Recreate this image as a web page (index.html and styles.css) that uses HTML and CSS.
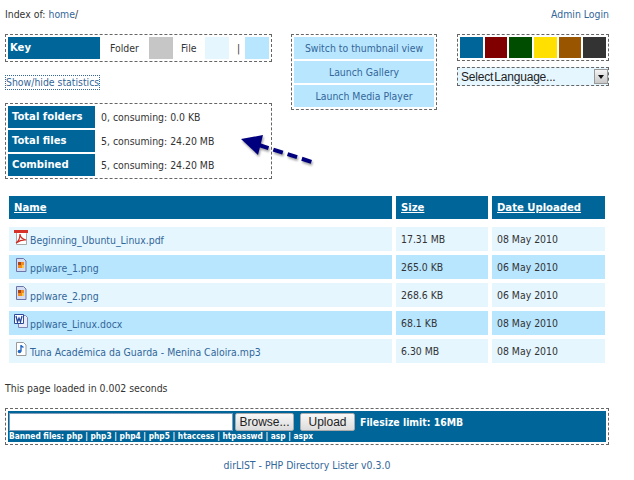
FILE: index.html
```html
<!DOCTYPE html>
<html lang="en">
<head>
  <meta charset="UTF-8" />
  <title>dirLIST - Index of home/</title>
  <link rel="stylesheet" href="styles.css">
</head>
<body>

  <!-- Top line -->
  <div class="top-line">
    <div>Index of: <a href="#">home</a>/</div>
    <a href="#">Admin Login</a>
  </div>

  <!-- Panels -->
  <div class="panels">
    <div class="left-col">
      <div class="box key-box">
        <div class="key-title">Key</div>
        <span class="key-label key-folder">Folder</span>
        <span class="swatch swatch-folder"></span>
        <span class="key-label key-file">File</span>
        <span class="swatch swatch-file"></span>
        <span class="key-label key-sep">|</span>
        <span class="swatch swatch-alt"></span>
      </div>
      <a href="#" class="stats-toggle">Show/hide statistics</a>
      <div class="box stats-box">
        <div class="stats-row"><div class="stats-title">Total folders</div><div>0, consuming: 0.0 KB</div></div>
        <div class="stats-row"><div class="stats-title">Total files</div><div>5, consuming: 24.20 MB</div></div>
        <div class="stats-row"><div class="stats-title">Combined</div><div>5, consuming: 24.20 MB</div></div>
      </div>
    </div>

    <div class="box view-box">
      <a href="#" class="view-link">Switch to thumbnail view</a>
      <a href="#" class="view-link">Launch Gallery</a>
      <a href="#" class="view-link">Launch Media Player</a>
    </div>

    <div class="right-col">
      <div class="box theme-box">
        <span class="theme theme-blue"></span>
        <span class="theme theme-red"></span>
        <span class="theme theme-green"></span>
        <span class="theme theme-yellow"></span>
        <span class="theme theme-brown"></span>
        <span class="theme theme-dark"></span>
      </div>
      <div class="lang-select">
        <span>Select Language...</span>
        <span class="lang-arrow"></span>
      </div>
    </div>
  </div>

  <!-- File listing -->
  <div class="listing">
    <div class="head-row">
      <a href="#">Name</a>
      <a href="#">Size</a>
      <a href="#">Date Uploaded</a>
    </div>

    <div class="file-row">
      <div class="file-name">
        <svg class="file-icon" viewBox="0 0 16 16">
          <path d="M3.5 2.5h8l2 2v11h-10z" fill="#fff" stroke="#a9a9a9"/>
          <path d="M1 1h14v3H1z" fill="#d8332a"/>
          <path d="M3 14c3-2 4-6 4-9 0 3 2 5 6 6-4-.5-7 1-10 3z" fill="none" stroke="#cc2a22" stroke-width="1.2"/>
        </svg>
        <a href="#">Beginning_Ubuntu_Linux.pdf</a>
      </div>
      <div>17.31 MB</div>
      <div>08 May 2010</div>
    </div>

    <div class="file-row alt">
      <div class="file-name">
        <svg class="file-icon" viewBox="0 0 16 16">
          <path d="M3.5 1.5h7l2.500 2.500v10.500h-9.500z" fill="#d6dcf0" stroke="#6a76a8"/>
          <path d="M5 5h6v6H5z" fill="#f08a1d"/>
          <path d="M5 5h3v3H5z" fill="#a8481a"/>
          <path d="M9 8h2v3H9z" fill="#f7c94d"/>
        </svg>
        <a href="#">pplware_1.png</a>
      </div>
      <div>265.0 KB</div>
      <div>06 May 2010</div>
    </div>

    <div class="file-row">
      <div class="file-name">
        <svg class="file-icon" viewBox="0 0 16 16">
          <path d="M3.5 1.500h7l2.500 2.500v10.500h-9.500z" fill="#d6dcf0" stroke="#6a76a8"/>
          <path d="M5 5h6v6H5z" fill="#f08a1d"/>
          <path d="M5 5h3v3H5z" fill="#a8481a"/>
          <path d="M9 8h2v3H9z" fill="#f7c94d"/>
        </svg>
        <a href="#">pplware_2.png</a>
      </div>
      <div>268.6 KB</div>
      <div>06 May 2010</div>
    </div>

    <div class="file-row alt">
      <div class="file-name">
        <svg class="file-icon" viewBox="0 0 16 16">
          <path d="M5.500 2.500h7l2 2v10h-9z" fill="#e8ecf8" stroke="#7a86b4"/>
          <path d="M1.500 1.500h9v9h-9z" fill="#fff" stroke="#2c4a9c"/>
          <path d="M3 3l1.500 6 1.500-4 1.500 4L9 3" fill="none" stroke="#2c4a9c" stroke-width="1.300"/>
        </svg>
        <a href="#">pplware_Linux.docx</a>
      </div>
      <div>68.1 KB</div>
      <div>08 May 2010</div>
    </div>

    <div class="file-row">
      <div class="file-name">
        <svg class="file-icon" viewBox="0 0 16 16">
          <path d="M3.500 1.500h7l2.500 2.500v10.500h-9.500z" fill="#fff" stroke="#9a9a9a"/>
          <path d="M8 4v6.500" stroke="#2467c4" stroke-width="1.400"/>
          <path d="M8 4l2.500 1.500V7L8 6z" fill="#2467c4"/>
          <circle cx="6.500" cy="10.500" r="1.800" fill="#2467c4"/>
        </svg>
        <a href="#">Tuna Académica da Guarda - Menina Caloira.mp3</a>
      </div>
      <div>6.30 MB</div>
      <div>08 May 2010</div>
    </div>
  </div>

  <p class="load-time">This page loaded in 0.002 seconds</p>

  <!-- Upload -->
  <div class="box upload-box">
    <div class="upload-inner">
      <div class="upload-line">
        <input type="text" class="upload-file" />
        <button class="upload-btn browse-btn">Browse...</button>
        <button class="upload-btn send-btn">Upload</button>
        <strong class="upload-limit">Filesize limit: 16MB</strong>
      </div>
      <div class="banned">Banned files: php | php3 | php4 | php5 | htaccess | htpasswd | asp | aspx</div>
    </div>
  </div>

  <div class="footer"><a href="#">dirLIST - PHP Directory Lister v0.3.0</a></div>

  <!-- Annotation arrow drawn over the page -->
  <svg class="arrow" width="90" height="50" viewBox="0 0 90 50">
    <defs>
      <filter id="arrowShadow" x="-20%" y="-20%" width="140%" height="150%">
        <feGaussianBlur stdDeviation="1.200"/>
      </filter>
    </defs>
    <g transform="translate(1 2)" fill="#777" filter="url(#arrowShadow)" opacity="0.7">
      <path d="M0 9l22-4-5 20z"/>
      <path d="M18 15l53 17" stroke="#777" stroke-width="4" stroke-dasharray="10 5" fill="none"/>
    </g>
    <path d="M0 9l22-4-5 20z" fill="#00007f"/>
    <path d="M18 15l53 17" stroke="#00007f" stroke-width="4" stroke-dasharray="10 5" fill="none"/>
  </svg>

</body>
</html>
```

FILE: styles.css
```css
body {
  font-family: "DejaVu Sans Condensed", "DejaVu Sans", Verdana, sans-serif;
  font-size: 10.4px;
  color: #333;
  background: #fff;
  margin: 0;
  padding: 8px 25px 0 5px;
  position: relative;
}
a {
  color: #336699;
  text-decoration: none;
}
.box {
  border: 1px dashed #666;
  padding: 2px;
}

/* Top line */
.top-line {
  display: flex;
  justify-content: space-between;
  line-height: 13px;
  margin-bottom: 13px;
}

/* Panels */
.panels {
  display: flex;
  align-items: flex-start;
}
.left-col {
  width: 267px;
  margin-right: 19px;
}
.key-box {
  display: flex;
  align-items: center;
  height: 22px;
}
.key-title {
  background: #006699;
  color: #fff;
  font-weight: bold;
  font-size: 11.2px;
  line-height: 22px;
  width: 92px;
  padding-left: 2px;
  box-sizing: border-box;
  margin-right: 10px;
}
.key-label {
  line-height: 22px;
}
.key-folder {
  width: 39px;
}
.key-file {
  width: 24px;
  margin-left: 8px;
}
.key-sep {
  width: 8px;
  margin-left: 8px;
}
.swatch {
  width: 24px;
  height: 22px;
}
.swatch-folder {
  background: #c6c6c6;
}
.swatch-file {
  background: #e5f6ff;
}
.swatch-alt {
  background: #b9e6ff;
}
.stats-toggle {
  display: inline-block;
  border: 1px dotted #336699;
  line-height: 13px;
  margin: 13px 0 13px;
  vertical-align: top;
}
.stats-box {
  height: 70px;
}
.stats-row {
  display: flex;
  align-items: center;
  height: 22px;
  margin-bottom: 2px;
}
.stats-title {
  background: #006699;
  color: #fff;
  font-weight: bold;
  font-size: 11.2px;
  line-height: 22px;
  width: 83px;
  padding-left: 4px;
  margin-right: 6px;
}
.view-box {
  width: 140px;
  display: flex;
  flex-direction: column;
  gap: 2px;
}
.view-link {
  background: #b9e6ff;
  line-height: 22px;
  text-align: center;
}
.right-col {
  width: 152px;
  margin-left: 20px;
}
.theme-box {
  display: flex;
  gap: 2px;
  height: 21px;
  padding: 2px;
}
.theme {
  flex: 1;
}
.theme-blue {
  background: #006699;
}
.theme-red {
  background: #800000;
}
.theme-green {
  background: #004d00;
}
.theme-yellow {
  background: #ffe000;
}
.theme-brown {
  background: #995500;
}
.theme-dark {
  background: #333;
}
.lang-select {
  display: flex;
  align-items: center;
  justify-content: space-between;
  margin-top: 6px;
  height: 17px;
  padding-left: 3px;
  border: 1px dashed #666;
  background: #e5f6ff;
  color: #222;
  font-family: "Liberation Sans", Arial, sans-serif;
  font-size: 12px;
  letter-spacing: -0.2px;
  word-spacing: -2px;
}
.lang-arrow {
  width: 14px;
  height: 15px;
  background: linear-gradient(#f4f4f4, #c8c8c8);
  border: 1px solid #999;
  box-sizing: border-box;
  position: relative;
}
.lang-arrow::after {
  content: "";
  position: absolute;
  left: 3px;
  top: 5px;
  border: 3px solid transparent;
  border-top: 4px solid #111;
  border-bottom: 0;
}

/* File listing */
.listing {
  margin: 17px 0 0 4px;
  width: 596px;
}
.head-row,
.file-row {
  display: grid;
  grid-template-columns: 383px 92px 113px;
  column-gap: 4px;
}
.head-row {
  margin-bottom: 8px;
}
.head-row a {
  background: #006699;
  color: #fff;
  font-weight: bold;
  font-size: 11.2px;
  line-height: 23px;
  padding-left: 5px;
  text-decoration: underline;
}
.file-row {
  margin-bottom: 4px;
}
.file-row > div {
  background: #e5f6ff;
  height: 24px;
  line-height: 24px;
  padding-left: 5px;
}
.file-row.alt > div {
  background: #b9e6ff;
}
.file-row > .file-name {
  display: flex;
  align-items: center;
  gap: 1px;
  padding-left: 4px;
}
.file-icon {
  width: 16px;
  height: 16px;
  margin-top: -4px;
}
.file-name a {
  margin-top: 2px;
}

/* Bottom of the page */
.load-time {
  margin: 19px 0 13px;
  line-height: 13px;
}
.upload-box {
  height: 31px;
}
.upload-inner {
  background: #006699;
  height: 31px;
  padding: 2px 0 0 1px;
  box-sizing: border-box;
}
.upload-line {
  display: flex;
  align-items: center;
  height: 18px;
}
.upload-file {
  width: 224px;
  height: 18px;
  box-sizing: border-box;
  border: 1px solid #7f9db9;
  background: #fff;
  padding: 0;
  margin: 0;
}
.upload-btn {
  font-family: "Liberation Sans", Arial, sans-serif;
  font-size: 12px;
  color: #222;
  height: 18px;
  padding: 0;
  border: 1px solid #aaa;
  border-radius: 2px;
  background: linear-gradient(#f8f8f8, #dcdcdc);
}
.browse-btn {
  width: 59px;
  margin-left: 2px;
}
.send-btn {
  width: 55px;
  margin-left: 6px;
}
.upload-limit {
  color: #fff;
  margin-left: 5px;
}
.banned {
  color: #fff;
  font-size: 8.3px;
  font-weight: bold;
  line-height: 11px;
}
.footer {
  text-align: center;
  margin: 14px 0 0;
  line-height: 13px;
}
.arrow {
  position: absolute;
  left: 241px;
  top: 130px;
}
```
